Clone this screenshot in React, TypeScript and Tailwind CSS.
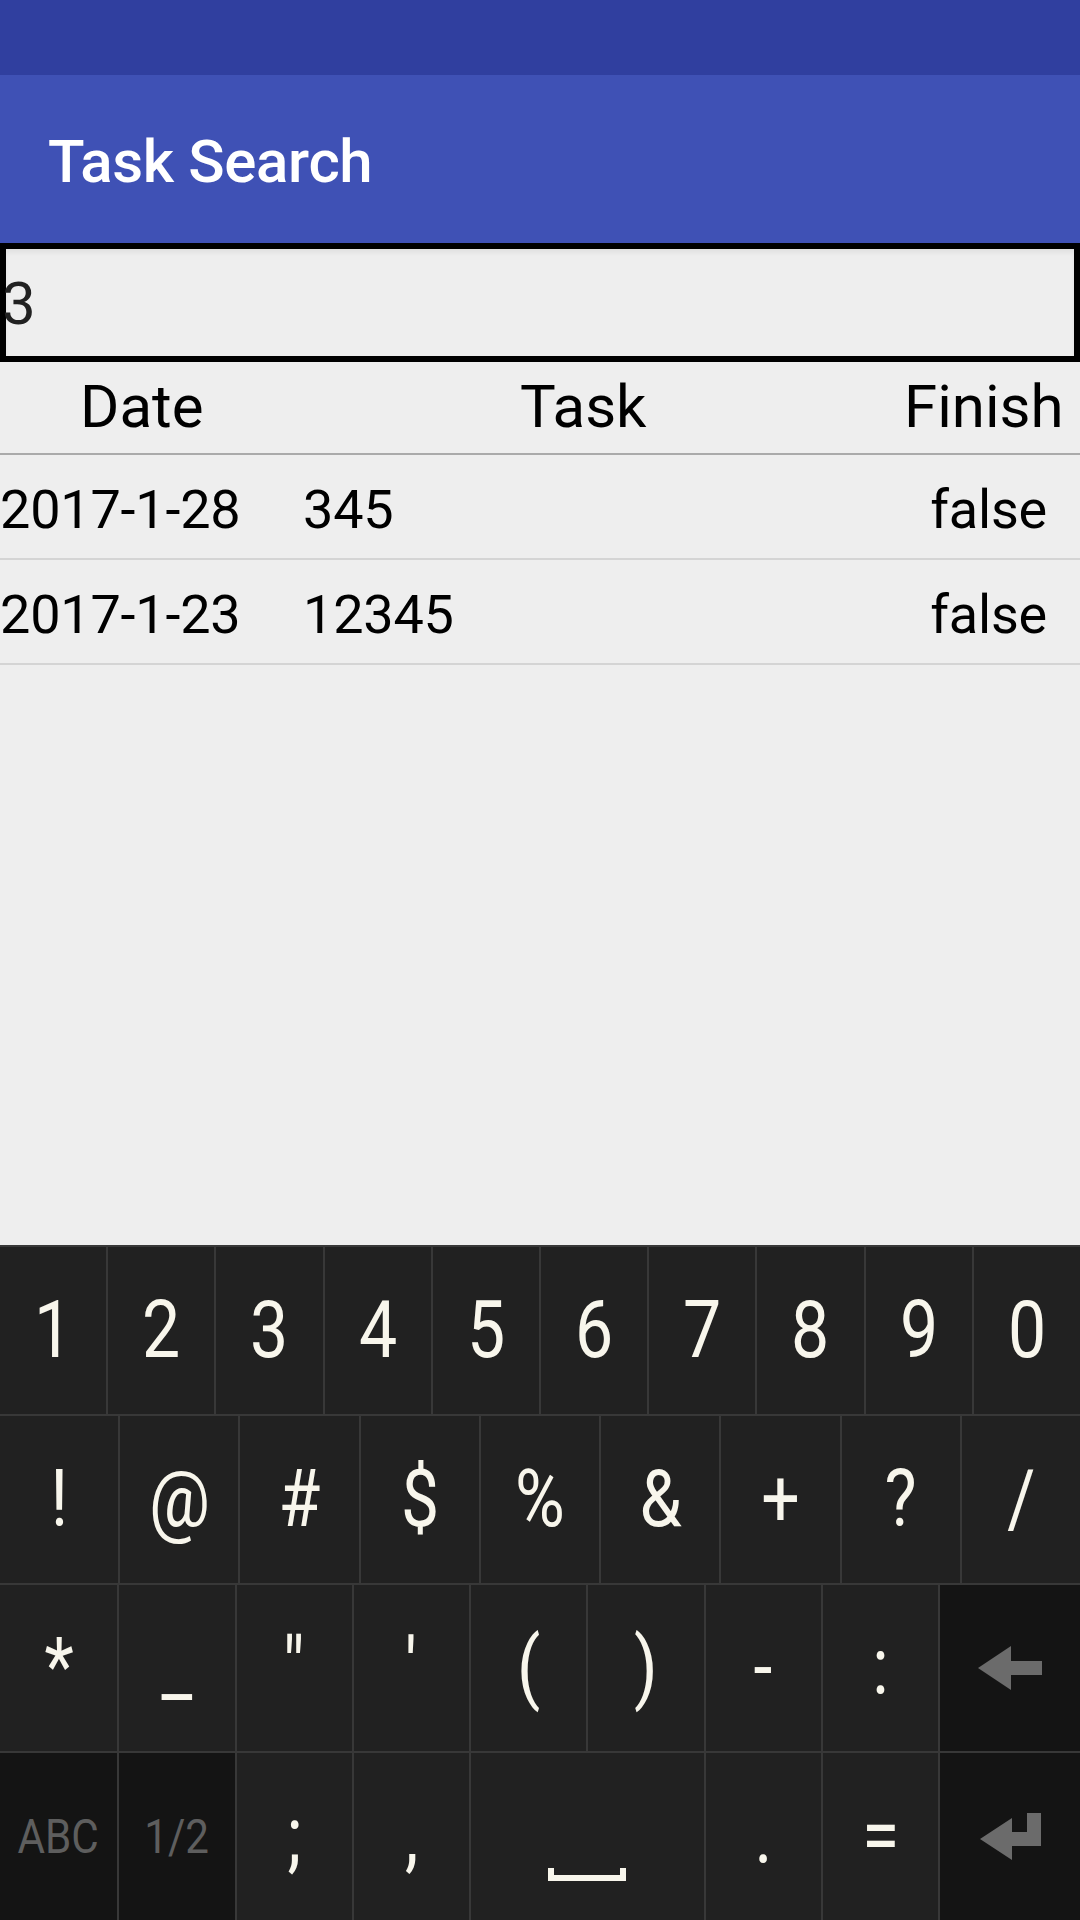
import { ReactNode } from 'react';

const rows = [
  { date: '2017-1-28', task: '345', finish: 'false' },
  { date: '2017-1-23', task: '12345', finish: 'false' },
];

const numberKeys = ['1', '2', '3', '4', '5', '6', '7', '8', '9', '0'];
const symbolKeys = ['!', '@', '#', '$', '%', '&', '+', '?', '/'];
const punctKeys = ['*', '_', '"', "'", '(', ')', '-', ':'];

function Glyph({ children }: { children: ReactNode }) {
  return (
    <span className="inline-block text-[79px] leading-none text-[#f8f6ec] scale-x-[0.86]">{children}</span>
  );
}

function SubLabel({ children }: { children: ReactNode }) {
  return (
    <span className="inline-block text-[49px] leading-none text-[#5e5e5e] scale-x-[0.86]">{children}</span>
  );
}

function Key({ children, first, dark, className = '' }: { children?: ReactNode; first?: boolean; dark?: boolean; className?: string }) {
  return (
    <div
      className={`flex items-center justify-center ${first ? '' : 'border-l-2 border-[#383838]'} ${dark ? 'bg-[#141414]' : ''} ${className}`}
    >
      {children}
    </div>
  );
}

function BackspaceIcon() {
  return (
    <svg width="64" height="44" viewBox="0 0 64 44">
      <polygon points="0,22 33,0 33,15 64,15 64,29 33,29 33,44" fill="#6b6b6b" />
    </svg>
  );
}

function EnterIcon() {
  return (
    <svg width="61" height="47" viewBox="0 0 61 47">
      <polygon points="0,26 32,5 32,19 47,19 47,0 61,0 61,33 32,33 32,47" fill="#6b6b6b" />
    </svg>
  );
}

function SpaceIcon() {
  return (
    <svg width="78" height="13" viewBox="0 0 78 13">
      <path d="M0 0 H6 V7 H72 V0 H78 V13 H0 Z" fill="#f8f6ec" />
    </svg>
  );
}

export default function App() {
  return (
    <div className="w-[1080px] h-[1920px] flex flex-col bg-[#eeeeee] font-['Roboto',sans-serif] overflow-hidden">
      {/* status bar */}
      <div className="h-[75px] shrink-0 bg-[#303f9f]" />

      {/* toolbar */}
      <div className="h-[168px] shrink-0 bg-[#3f51b5] flex items-center pl-[48px] pt-[6px]">
        <span className="text-[60px] leading-[70px] font-medium tracking-[-0.35px] text-white">Task Search</span>
      </div>

      {/* search field */}
      <div className="h-[119px] shrink-0 border-[6px] border-black shadow-[inset_0_4px_4px_rgba(0,0,0,0.05)] pt-[20px]">
        <span className="block -ml-[4px] text-[60px] leading-[70px] text-[#212121]">3</span>
      </div>

      {/* header */}
      <div className="h-[93px] shrink-0 flex border-b-2 border-[#aaaaaa] pt-[10px] text-[60px] leading-[70px] text-black">
        <span className="w-[520px] pl-[80px]">Date</span>
        <span className="w-[384px]">Task</span>
        <span>Finish</span>
      </div>

      {/* results */}
      {rows.map((r) => (
        <div key={r.date} className="h-[105px] shrink-0 flex border-b-2 border-[#d4d4d4] pt-[23px] text-[54px] leading-[64px] tracking-[-0.2px] text-black">
          <span className="w-[303px]">{r.date}</span>
          <span className="flex-1">{r.task}</span>
          <span className="pr-[33px]">{r.finish}</span>
        </div>
      ))}

      <div className="flex-1" />

      {/* keyboard */}
      <div className="h-[675px] shrink-0 flex flex-col bg-[#212121]">
        <div className="flex-1 flex border-t-2 border-[#383838]">
          {numberKeys.map((k, i) => (
            <Key key={k} first={i === 0} className="flex-1">
              <Glyph>{k}</Glyph>
            </Key>
          ))}
        </div>
        <div className="flex-1 flex border-t-2 border-[#383838]">
          {symbolKeys.map((k, i) => (
            <Key key={k} first={i === 0} className="flex-1">
              <Glyph>{k}</Glyph>
            </Key>
          ))}
        </div>
        <div className="flex-1 grid grid-cols-[repeat(8,minmax(0,1fr))_142px] border-t-2 border-[#383838]">
          {punctKeys.map((k, i) => (
            <Key key={k} first={i === 0}>
              <Glyph>{k}</Glyph>
            </Key>
          ))}
          <Key dark>
            <BackspaceIcon />
          </Key>
        </div>
        <div className="flex-1 grid grid-cols-[repeat(8,minmax(0,1fr))_142px] border-t-2 border-[#383838]">
          <Key first dark>
            <SubLabel>ABC</SubLabel>
          </Key>
          <Key dark>
            <SubLabel>1/2</SubLabel>
          </Key>
          <Key>
            <Glyph>;</Glyph>
          </Key>
          <Key>
            <Glyph>,</Glyph>
          </Key>
          <Key className="col-span-2 !items-end pb-[39px]">
            <SpaceIcon />
          </Key>
          <Key>
            <Glyph>.</Glyph>
          </Key>
          <Key>
            <Glyph>=</Glyph>
          </Key>
          <Key dark>
            <EnterIcon />
          </Key>
        </div>
      </div>
    </div>
  );
}
